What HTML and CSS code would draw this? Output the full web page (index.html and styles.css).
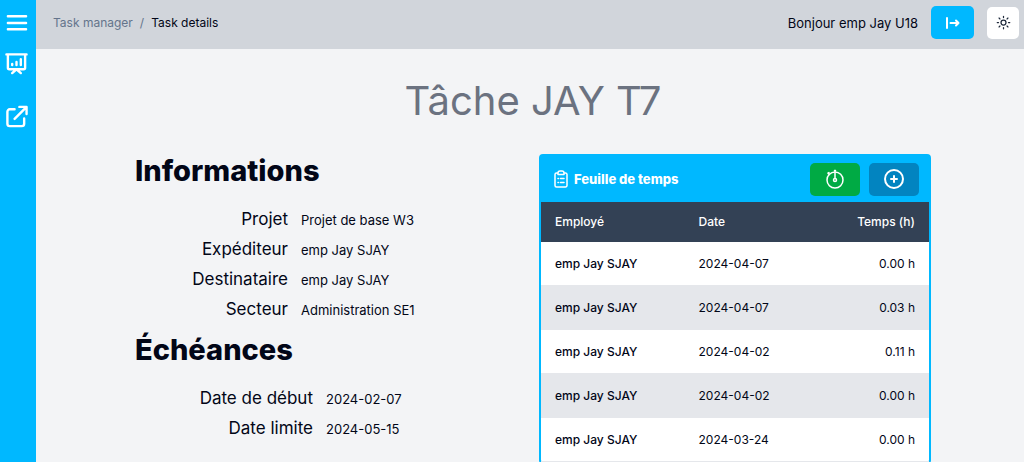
FILE: index.html
```html
<!DOCTYPE html>
<html lang="fr">
<head>
<meta charset="utf-8">
<meta name="viewport" content="width=device-width, initial-scale=1">
<title>Task details</title>
<link rel="stylesheet" href="styles.css">
</head>
<body>
<div class="app">
  <nav class="sidebar" aria-label="Navigation">
    <button class="side-item" type="button" aria-label="Menu">
      <svg class="side-icon" viewBox="0 0 24 24"><path d="M3 5.500h19M3 12.500h19M3 19h19"/></svg>
    </button>
    <a class="side-item" href="#" aria-label="Tableau de bord">
      <svg class="side-icon" viewBox="0 0 24 24"><path d="M1.500 2.500h21M3 2.500v14a1.500 1.500 0 0 0 1.500 1.500h15a1.500 1.500 0 0 0 1.500-1.500v-14M7.500 22l4.500-4 4.500 4M7.500 13.500v-1M12 13.500v-3M16.500 13.500v-6"/></svg>
    </a>
    <a class="side-item" href="#" aria-label="Ouvrir">
      <svg class="side-icon" viewBox="0 0 24 24"><path d="M10 4.500H5a2.500 2.500 0 0 0-2.500 2.500v12.500A2.500 2.500 0 0 0 5 22h12.500a2.500 2.500 0 0 0 2.500-2.500V14M10 14.500 22 2.500M15 2h7.500v7.500"/></svg>
    </a>
  </nav>
  <div class="page">
    <header class="topbar">
      <nav class="crumbs" aria-label="Fil d’Ariane">
        <a class="crumb" href="#">Task manager</a>
        <span class="crumb-sep">/</span>
        <span class="crumb-current">Task details</span>
      </nav>
      <div class="user">
        <span class="greeting">Bonjour emp Jay U18</span>
        <button class="logout" type="button" aria-label="Déconnexion">
          <svg class="logout-icon" viewBox="0 0 16 16"><path d="M2 3v10M5.500 8h8M11 5.500 13.500 8 11 10.500"/></svg>
        </button>
        <button class="theme" type="button" aria-label="Thème">
          <svg class="theme-icon" viewBox="0 0 24 24"><circle cx="12" cy="12" r="4"/><path d="M12 2v2M12 20v2M4.900 4.900l1.400 1.400M17.700 17.700l1.400 1.400M2 12h2M20 12h2M6.300 17.700l-1.400 1.400M19.100 4.900l-1.400 1.400"/></svg>
        </button>
      </div>
    </header>
    <main class="content">
      <h1 class="title">Tâche JAY T7</h1>
      <div class="columns">
        <div class="details">
          <section class="group">
            <h2 class="heading">Informations</h2>
            <dl class="facts">
              <dt>Projet</dt><dd>Projet de base W3</dd>
              <dt>Expéditeur</dt><dd>emp Jay SJAY</dd>
              <dt>Destinataire</dt><dd>emp Jay SJAY</dd>
              <dt>Secteur</dt><dd>Administration SE1</dd>
            </dl>
          </section>
          <section class="group">
            <h2 class="heading">Échéances</h2>
            <dl class="facts facts-dates">
              <dt>Date de début</dt><dd>2024-02-07</dd>
              <dt>Date limite</dt><dd>2024-05-15</dd>
            </dl>
          </section>
        </div>
        <section class="sheet">
          <div class="sheet-head">
            <svg class="sheet-icon" viewBox="0 0 16 18"><path d="M5 3H3.500A1.500 1.500 0 0 0 2 4.500v11A1.500 1.500 0 0 0 3.500 17h9a1.500 1.500 0 0 0 1.500-1.500v-11A1.500 1.500 0 0 0 12.500 3H11M5 4.500V3a2 2 0 0 1 2-2h2a2 2 0 0 1 2 2v1.500zM5 8.500h.5M7.500 8.500H11M5 12.500h.5M7.500 12.500H11"/></svg>
            <h3 class="sheet-title">Feuille de temps</h3>
            <button class="action action-timer" type="button" aria-label="Chronomètre">
              <svg class="action-icon thin" viewBox="0 0 20 20"><circle cx="10" cy="11" r="8"/><circle cx="10" cy="11" r="1.500"/><path d="M10 1.500v8M9.500 1.500h1M3 4l1.500 1.500M3 4.500l1-1"/></svg>
            </button>
            <button class="action action-add" type="button" aria-label="Ajouter">
              <svg class="action-icon" viewBox="0 0 20 20"><circle cx="10" cy="10" r="9"/><path d="M10 7v6M7 10h6"/></svg>
            </button>
          </div>
          <table class="times">
            <thead><tr><th scope="col">Employé</th><th scope="col">Date</th><th scope="col">Temps (h)</th></tr></thead>
            <tbody>
              <tr><th scope="row">emp Jay SJAY</th><td>2024-04-07</td><td>0.00 h</td></tr>
              <tr><th scope="row">emp Jay SJAY</th><td>2024-04-07</td><td>0.03 h</td></tr>
              <tr><th scope="row">emp Jay SJAY</th><td>2024-04-02</td><td>0.11 h</td></tr>
              <tr><th scope="row">emp Jay SJAY</th><td>2024-04-02</td><td>0.00 h</td></tr>
              <tr><th scope="row">emp Jay SJAY</th><td>2024-03-24</td><td>0.00 h</td></tr>
            </tbody>
          </table>
        </section>
      </div>
    </main>
  </div>
</div>
</body>
</html>
```
FILE: styles.css
```css
*, *::before, *::after { box-sizing: border-box; }
body {
  margin: 0;
  background: #f3f4f6;
  color: #020617;
  font-family: Inter, "Liberation Sans", sans-serif;
  font-size: 13px;
  line-height: 20px;
}
h1, h2, h3, dl, dd { margin: 0; }
button { border: 0; padding: 0; font: inherit; cursor: pointer; }
a { color: inherit; text-decoration: none; }
svg {
  display: block;
  fill: none;
  stroke: currentColor;
  stroke-width: 2;
  stroke-linecap: round;
  stroke-linejoin: round;
}
.app { display: flex; height: 100vh; overflow: hidden; }
.sidebar {
  display: flex;
  flex-direction: column;
  align-items: flex-start;
  flex: none;
  width: 36px;
  padding: 11px 0 0 5px;
  gap: 30px;
  background: #00b8ff;
  color: #fff;
}
.side-item { display: block; background: none; color: inherit; }
.side-item:first-child { margin-bottom: -12px; }
.side-icon { width: 23px; height: 23px; stroke-width: 2.5; }
.page { flex: 1; min-width: 0; }
.topbar {
  display: flex;
  align-items: center;
  justify-content: space-between;
  height: 49px;
  padding: 0 5px 4px 17px;
  background: #d1d5db;
}
.crumbs { display: flex; gap: 7px; font-size: 12px; }
.crumb, .crumb-sep { color: #64748b; }
.user { display: flex; align-items: center; }
.greeting { font-size: 13px; }
.logout, .theme { display: grid; place-items: center; border-radius: 5px; }
.logout { width: 43px; height: 33px; margin: 0 13px; background: #00b8ff; color: #fff; }
.logout-icon { width: 16px; height: 16px; }
.theme { width: 32px; height: 32px; background: #fff; color: #1e293b; }
.theme-icon { width: 15px; height: 15px; }
.content { padding: 28px 93px 0 99px; }
.title {
  color: #6b7280;
  font-size: 40px;
  font-weight: 400;
  line-height: 48px;
  text-align: center;
}
.columns {
  display: grid;
  grid-template-columns: 1fr 392px;
  align-items: start;
  gap: 13px;
  margin-top: 29px;
}
.group { padding-bottom: 8px; }
.heading { font-size: 29px; font-weight: 800; line-height: 34px; }
.facts {
  display: grid;
  grid-template-columns: 153px 1fr;
  column-gap: 13px;
  align-items: baseline;
  padding-top: 17px;
  line-height: 29px;
}
.facts-dates { grid-template-columns: 178px 1fr; }
.facts dt { font-size: 17px; text-align: right; }
.sheet {
  border: 2px solid #00b8ff;
  border-radius: 4px;
  background: #fff;
}
.sheet-head {
  display: flex;
  align-items: center;
  height: 46px;
  padding: 0 10px 0 12px;
  background: #00b8ff;
  color: #fff;
}
.sheet-icon { width: 16px; height: 18px; stroke-width: 1.5; }
.sheet-title { flex: 1; padding-left: 5px; font-size: 13px; font-weight: 800; }
.action {
  display: grid;
  place-items: center;
  width: 50px;
  height: 33px;
  margin-left: 9px;
  border-radius: 5px;
  color: #fff;
}
.action-timer { background: #00aa44; }
.action-add { background: #0284c0; }
.action-icon { width: 20px; height: 20px; }
.thin { stroke-width: 1.5; }
.times { width: 100%; border-spacing: 0; font-size: 12px; }
.times th, .times td { height: 44px; padding: 0 14px; text-align: left; }
.times th { width: 37%; font-weight: 500; }
.times tbody th, .times tbody td { border-bottom: 1px solid #e5e7eb; }
.times thead th { height: 40px; background: #334155; color: #fff; }
.times th:last-child, .times td:last-child { text-align: right; }
.times tbody tr:nth-child(even) { background: #e5e7eb; }
```
